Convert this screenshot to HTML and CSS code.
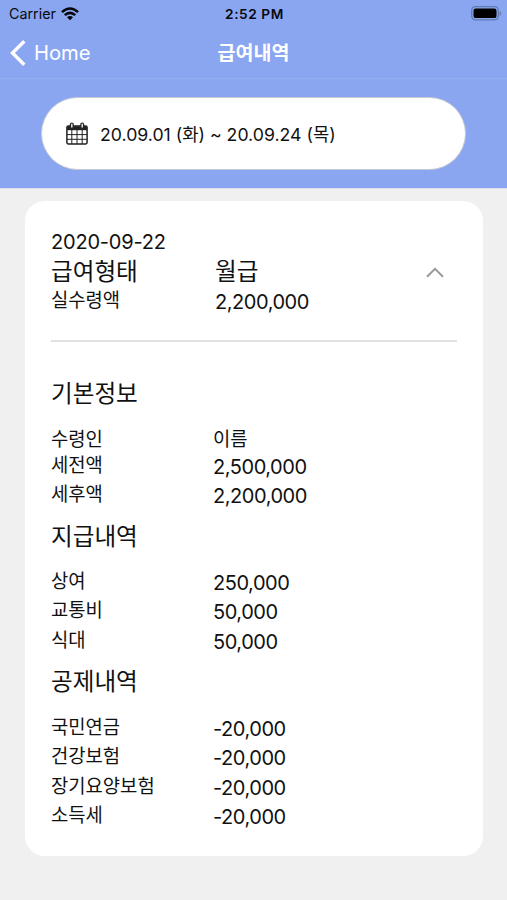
FILE: index.html
```html
<!DOCTYPE html>
<html lang="ko">
<head>
<meta charset="utf-8">
<title>급여내역</title>
<link rel="stylesheet" href="styles.css">
</head>
<body>
<header class="top">
  <div class="status">
    <div class="carrier"><span class="carrier-name">Carrier</span>
      <svg class="wifi" viewBox="0 0 18 14" width="18" height="14" fill="none" stroke="#050608" stroke-width="2.6"><path d="M1 5.1Q9-2.1 17 5.1M3.8 8.1Q9 3.5 14.2 8.1"/><path d="M6 10.2Q9 7.7 12 10.2L9 13.3Z" fill="#050608" stroke="none"/></svg>
    </div>
    <span class="time">2:52 PM</span>
    <svg class="battery" viewBox="0 0 31 15" width="31" height="15"><rect x=".7" y=".7" width="26.6" height="13.2" rx="3.8" fill="none" stroke="#617bae" stroke-width="1.3"/><rect x="2.5" y="2.5" width="23" height="9.6" rx="2.2" fill="#000"/><path d="M28.7 5v5q1.4-.7 1.4-2.5T28.7 5Z" fill="#617bae"/></svg>
  </div>
  <nav class="nav">
    <a class="back"><svg viewBox="0 0 16 26" width="16" height="26" fill="none" stroke="#fff" stroke-width="3.4"><path d="M14.3 1.3 2.5 13l11.8 11.7"/></svg><span>Home</span></a>
    <h1>급여내역</h1>
  </nav>
  <div class="filter">
    <div class="range">
      <svg class="calendar" viewBox="0 0 22 23" width="22" height="23" fill="none" stroke="#222"><rect x=".9" y="4" width="20.2" height="18" rx="1.4" stroke-width="1.5"/><path d="M1 4.2h20v4H1z" fill="#222" stroke="none"/><path d="M1 12.6h20M1 17.3h20M5.8 8v14M11 8v14M16.2 8v14" stroke-width="1"/><g fill="#ddd" stroke-width="1.2"><rect x="4.4" y="1" width="2.8" height="5.4" rx="1.4"/><rect x="14.8" y="1" width="2.8" height="5.4" rx="1.4"/></g></svg>
      <span>20.09.01 (화) ~ 20.09.24 (목)</span>
    </div>
  </div>
</header>
<main class="card">
  <section class="summary">
    <div class="date">2020-09-22</div>
    <div class="pair type"><span>급여형태</span><span>월급</span><svg viewBox="0 0 18 11" width="18" height="11" fill="none" stroke="#999" stroke-width="2"><path d="M1 9.8 9 1.8l8 8"/></svg></div>
    <div class="pair"><span class="label">실수령액</span><span class="num">2,200,000</span></div>
  </section>
  <section class="group basic">
    <h2>기본정보</h2>
    <div class="pair recipient"><span class="label">수령인</span><span class="label">이름</span></div>
    <div class="pair"><span class="label">세전액</span><span class="num">2,500,000</span></div>
    <div class="pair"><span class="label">세후액</span><span class="num">2,200,000</span></div>
  </section>
  <section class="group">
    <h2>지급내역</h2>
    <div class="pair"><span class="label">상여</span><span class="num">250,000</span></div>
    <div class="pair"><span class="label">교통비</span><span class="num">50,000</span></div>
    <div class="pair"><span class="label">식대</span><span class="num">50,000</span></div>
  </section>
  <section class="group">
    <h2>공제내역</h2>
    <div class="pair"><span class="label">국민연금</span><span class="num">-20,000</span></div>
    <div class="pair"><span class="label">건강보험</span><span class="num">-20,000</span></div>
    <div class="pair"><span class="label">장기요양보험</span><span class="num">-20,000</span></div>
    <div class="pair"><span class="label">소득세</span><span class="num">-20,000</span></div>
  </section>
</main>
</body>
</html>
```
FILE: styles.css
```css
* { box-sizing: border-box; }
body { margin: 0; height: 900px; background: #f0f0f0; color: #111; font-family: Inter, "Noto Sans CJK KR", sans-serif; overflow: hidden; }
h1, h2 { margin: 0; }
svg { display: block; flex: none; }
.top { height: 189px; background: #8aa6f1; border-bottom: 1px solid #d9dfef; }
.status { display: grid; grid-template-columns: 1fr auto 1fr; height: 27px; padding: 0 7px 0 9px; align-items: center; color: #080a10; }
.carrier { display: flex; align-items: center; gap: 5px; font-size: 14.3px; line-height: 20px; }
.time { font-size: 13.7px; letter-spacing: .55px; font-weight: 600; line-height: 20px; }
.battery { justify-self: end; margin-right: -2px; }
.nav { display: grid; grid-template-columns: 1fr auto 1fr; align-items: center; height: 52px; padding: 0 10px; border-bottom: 1px solid #95b0f2; color: #fff; }
.back { display: flex; align-items: center; gap: 8px; font-size: 20.2px; line-height: 26px; }
.nav h1 { padding-bottom: 2px; font-family: "Noto Sans CJK KR", sans-serif; font-size: 19.5px; line-height: 26px; font-weight: 700; }
.filter { padding: 18px 41px 0; }
.range { display: flex; align-items: center; gap: 12px; height: 73px; padding-left: 24px; border: 1px solid #c5c9d2; border-radius: 37px; background: #fff; font-size: 17.7px; line-height: 24px; white-space: nowrap; }
.range span { padding-top: 2px; }
.card { width: 458px; height: 655px; margin: 12px 0 0 25px; padding: 0 26px; border-radius: 20px; background: #fff; }
.summary { height: 141px; padding-top: 27px; border-bottom: 2px solid #e2e2e2; }
.date { font-size: 20px; line-height: 28px; letter-spacing: -.2px; }
.pair { display: grid; grid-template-columns: 162px 1fr; height: 29.3px; line-height: 29.3px; }
.summary .pair { grid-template-columns: 164px 1fr auto; }
.summary .type { height: 28.3px; font: 23.6px/29px "Noto Sans CJK KR", sans-serif; align-items: center; padding-right: 13px; }
.type svg { margin-top: 4px; }
.label { font-family: "Noto Sans CJK KR", sans-serif; font-size: 18.8px; }
.num { font-size: 20px; letter-spacing: -.45px; padding-top: 4px; }
.group h2 { height: 47.6px; font: 23.6px/35px "Noto Sans CJK KR", sans-serif; }
.group { padding-bottom: 10.4px; }
.group.basic { padding-top: 33px; }
.recipient { height: 26px; }
```
